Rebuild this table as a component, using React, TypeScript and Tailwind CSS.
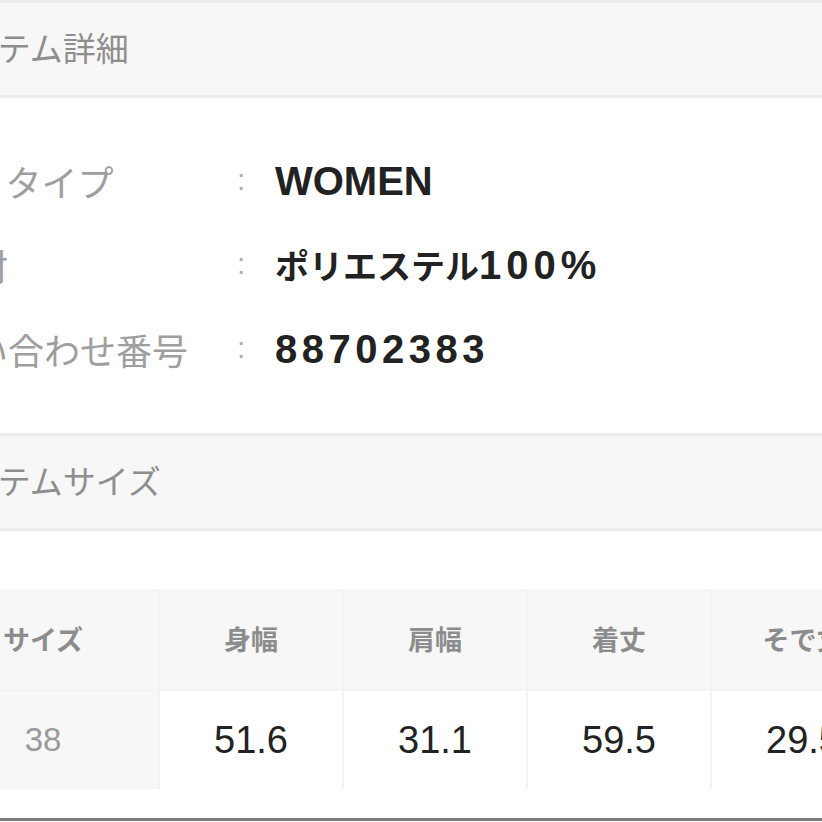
import { ReactNode } from "react";

const jp = "font-['Noto_Sans_CJK_JP',sans-serif]";
const latin = "font-['Liberation_Sans','Noto_Sans_CJK_JP',sans-serif]";

interface DetailRow {
  label: string;
  value: ReactNode;
}

const detailRows: DetailRow[] = [
  { label: "ボディタイプ", value: "WOMEN" },
  {
    label: "主素材",
    value: (
      <>
        <span className={`text-[34px] ${jp}`}>ポリエステル</span>
        <span className="tracking-[5px]">100%</span>
      </>
    ),
  },
  {
    label: "お問い合わせ番号",
    value: <span className="tracking-[4.5px]">88702383</span>,
  },
];

const sizeHeaders = ["サイズ", "身幅", "肩幅", "着丈", "そで丈"];
const sizeValues = ["51.6", "31.1", "59.5", "29.5"];

const SectionHeader: React.FC<{ title: string }> = ({ title }) => (
  <div className="border-y-[3px] border-[#ececec] bg-[#f7f7f7]">
    <div
      className={`flex h-[92px] items-center pb-[3px] pl-[34px] text-[33px] text-[#8e8e8e] ${jp}`}
    >
      {title}
    </div>
  </div>
);

const App: React.FC = () => {
  return (
    <div className="h-[822px] w-[822px] overflow-hidden bg-white">
      <div className="-ml-[100px] w-[1100px]">
        <SectionHeader title="アイテム詳細" />

        {/* Item details */}
        <div className="pb-[42px] pt-[41px]">
          {detailRows.map(({ label, value }) => (
            <div
              key={label}
              className="grid h-[84px] grid-cols-[333px_42px_1fr] items-center"
            >
              <span
                className={`whitespace-nowrap text-[36px] text-[#9e9e9e] ${jp}`}
              >
                {label}
              </span>
              <span
                className={`pb-[4px] pl-[4px] text-[30px] text-[#b0b0b0] ${latin}`}
              >
                :
              </span>
              <span
                className={`whitespace-nowrap text-[40px] font-bold text-[#222] ${latin}`}
              >
                {value}
              </span>
            </div>
          ))}
        </div>

        <SectionHeader title="アイテムサイズ" />

        {/* Size table */}
        <div className="pt-[58px]">
          <div className="ml-[28px] grid grid-cols-[230px_182px_182px_182px_182px] gap-[2px] bg-[#f3f3f3]">
            {sizeHeaders.map((h) => (
              <div
                key={h}
                className={`flex h-[100px] items-center justify-center bg-[#f7f7f7] text-[27px] font-bold text-[#8c8c8c] ${jp}`}
              >
                {h}
              </div>
            ))}
            <div
              className={`flex h-[98px] items-center justify-center bg-[#f7f7f7] text-[33px] text-[#9a9a9a] ${latin}`}
            >
              38
            </div>
            {sizeValues.map((v, i) => (
              <div
                key={i}
                className={`flex h-[98px] items-center justify-center bg-white text-[38px] text-[#222] ${latin}`}
              >
                {v}
              </div>
            ))}
          </div>
          <div className="mt-[29px] h-[3px] bg-[#7d7d7d]" />
        </div>
      </div>
    </div>
  );
};

export default App;
